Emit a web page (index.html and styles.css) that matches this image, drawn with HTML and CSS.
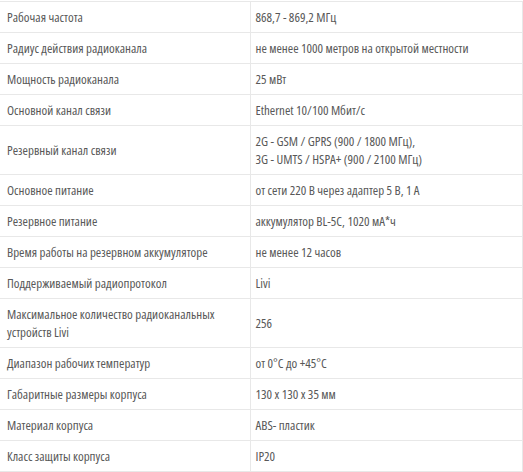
FILE: index.html
```html
<!DOCTYPE html>
<html lang="ru"><head><meta charset="utf-8"><link rel="stylesheet" href="styles.css"></head>
<body>
<table class="specs">
<colgroup><col class="col-name"><col class="col-value"></colgroup>
<tbody>
<tr><td>Рабочая частота</td><td>868,7 - 869,2 МГц</td></tr>
<tr><td>Радиус действия радиоканала</td><td>не менее 1000 метров на открытой местности</td></tr>
<tr><td>Мощность радиоканала</td><td>25 мВт</td></tr>
<tr><td>Основной канал связи</td><td>Ethernet 10/100 Мбит/с</td></tr>
<tr><td>Резервный канал связи</td><td>2G - GSM / GPRS (900 / 1800 МГц),<br>3G - UMTS / HSPA+ (900 / 2100 МГц)</td></tr>
<tr><td>Основное питание</td><td>от сети 220 В через адаптер 5 В, 1 А</td></tr>
<tr><td>Резервное питание</td><td>аккумулятор BL-5C, 1020 мА*ч</td></tr>
<tr><td>Время работы на резервном аккумуляторе</td><td>не менее 12 часов</td></tr>
<tr><td>Поддерживаемый радиопротокол</td><td>Livi</td></tr>
<tr><td>Максимальное количество радиоканальных<br>устройств Livi</td><td>256</td></tr>
<tr><td>Диапазон рабочих температур</td><td>от 0°C до +45°C</td></tr>
<tr><td>Габаритные размеры корпуса</td><td>130 x 130 x 35 мм</td></tr>
<tr><td>Материал корпуса</td><td>ABS- пластик</td></tr>
<tr><td>Класс защиты корпуса</td><td>IP20</td></tr>
</tbody>
</table>
</body></html>
```
FILE: styles.css
```css
html, body {
  margin: 0;
  padding: 0;
  background: #fff;
}
body {
  padding-top: 1px;
}
.specs {
  border-collapse: collapse;
  width: 523px;
  table-layout: fixed;
  font-family: "Open Sans", sans-serif;
  font-stretch: 75%;
  font-size: 13px;
  line-height: 18px;
  color: #585858;
}
.col-name {
  width: 250px;
}
.specs td {
  border: 1px solid #e8e8e8;
  padding: 6px 7px;
  vertical-align: middle;
  text-align: left;
}
.specs td:first-child {
  border-left: none;
  padding-left: 7px;
}
.specs td:last-child {
  padding-left: 5px;
}
```
